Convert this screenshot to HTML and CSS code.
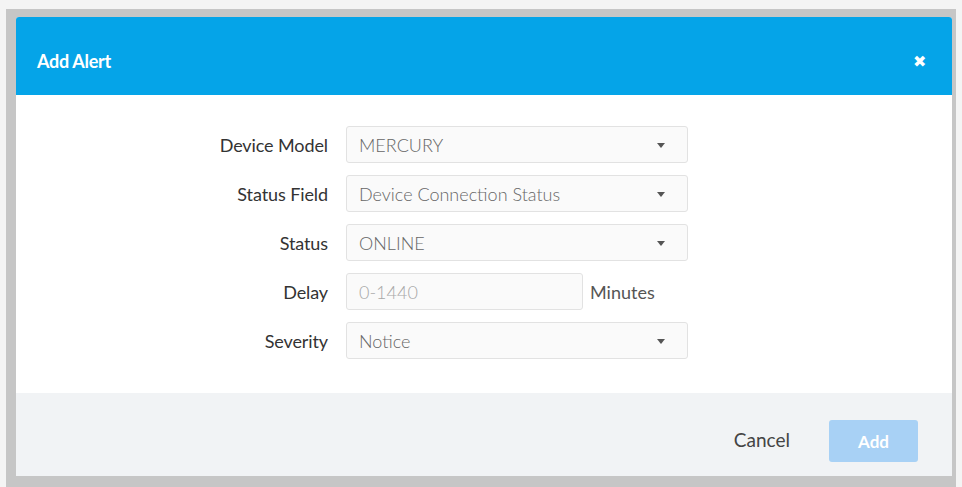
FILE: index.html
```html
<!DOCTYPE html>
<html lang="en">
<head>
  <meta charset="UTF-8" />
  <title>Add Alert</title>
  <link rel="stylesheet" href="styles.css">
</head>
<body>
  <div class="backdrop">
    <div class="modal">
      <div class="modal-header">
        <h2>Add Alert</h2>
        <span class="close">&#x2716;</span>
      </div>

      <div class="modal-body">
        <div class="form">
          <label>Device Model</label>
          <div class="select">MERCURY<span class="caret"></span></div>

          <label>Status Field</label>
          <div class="select">Device Connection Status<span class="caret"></span></div>

          <label>Status</label>
          <div class="select">ONLINE<span class="caret"></span></div>

          <label>Delay</label>
          <div class="delay">
            <div class="input placeholder">0-1440</div>
            <span class="unit">Minutes</span>
          </div>

          <label>Severity</label>
          <div class="select">Notice<span class="caret"></span></div>
        </div>
      </div>

      <div class="modal-footer">
        <span class="cancel">Cancel</span>
        <button class="add">Add</button>
      </div>
    </div>
  </div>
</body>
</html>
```

FILE: styles.css
```css
body {
  margin: 0;
  background: #f4f4f4;
  font-family: Lato, "Open Sans", sans-serif;
}
.backdrop {
  margin: 9px 6px 0 6px;
  height: 478px;
  background: #c6c6c6;
  padding: 8px 4px 0 10px;
  box-sizing: border-box;
}
.modal {
  background: #fff;
  height: 459px;
  display: flex;
  flex-direction: column;
  border-radius: 3px 3px 0 0;
  overflow: hidden;
}
.modal-header {
  background: #05a4e8;
  height: 78px;
  display: flex;
  align-items: center;
  justify-content: space-between;
  padding: 10px 26px 0 21px;
  box-sizing: border-box;
}
.modal-header h2 {
  margin: 0;
  color: #fff;
  font-size: 18px;
  font-weight: 700;
  letter-spacing: -0.3px;
}
.close {
  color: #fff;
  font-size: 16px;
}
.modal-body {
  flex: 1;
  padding: 31px 0 0 0;
}
.form {
  display: grid;
  grid-template-columns: 312px 342px;
  grid-auto-rows: 37px;
  column-gap: 18px;
  row-gap: 12px;
  align-items: center;
}
label {
  text-align: right;
  font-size: 18px;
  color: #333;
  letter-spacing: -0.1px;
}
.select,
.input {
  height: 37px;
  box-sizing: border-box;
  border: 1px solid #e2e2e2;
  border-radius: 3px;
  background: #fafafa;
  padding: 0 12px;
  display: flex;
  align-items: center;
  font-size: 18px;
  font-weight: 300;
  color: #666;
  position: relative;
}
.caret {
  position: absolute;
  right: 22px;
  top: 16px;
  border-left: 4.5px solid transparent;
  border-right: 4.5px solid transparent;
  border-top: 5px solid #555;
}
.delay {
  display: flex;
  align-items: center;
}
.delay .input {
  width: 237px;
}
.placeholder {
  color: #a8a8a8;
}
.unit {
  margin-left: 7px;
  font-size: 18px;
  color: #555;
}
.modal-footer {
  height: 83px;
  background: #f1f3f5;
  display: flex;
  justify-content: flex-end;
  align-items: flex-end;
  padding: 0 34px 14px 0;
  box-sizing: border-box;
}
.cancel {
  font-size: 19px;
  color: #444;
  margin: 0 39px 11px 0;
}
.add {
  width: 89px;
  height: 42px;
  border: none;
  border-radius: 3px;
  background: #a8d1f5;
  color: #fff;
  font-family: Lato, sans-serif;
  font-size: 17px;
  font-weight: 700;
}
```
